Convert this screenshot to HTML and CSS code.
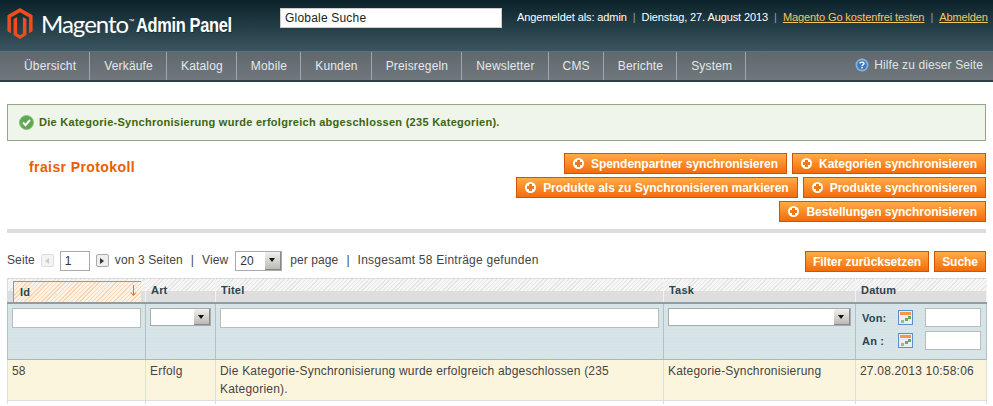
FILE: index.html
```html
<!DOCTYPE html>
<html>

<head>
  <meta charset="UTF-8">
  <title>fraisr Protokoll</title>
  <link rel="stylesheet" href="styles.css">
</head>

<body>
  <div class="header">
    <div class="logo">
      <svg class="logo-icon" viewBox="0 0 26 32">
        <path d="M13 0 26 7.5V24l-3.6 2.1V9.8L13 4.4 3.6 9.8v16.3L0 24V7.5Z" />
        <path d="M6.4 11.4 10 9.300v17l3 1.800 3-1.800v-17l3.600 2.100v16.400L13 32l-6.600-4.200Z" />
      </svg>
      <span class="logo-name">Magento</span>
      <span class="logo-tm">™</span>
      <span class="logo-panel">Admin Panel</span>
    </div>
    <input class="search" type="text" value="Globale Suche">
    <div class="user-links">
      <span>Angemeldet als: admin</span>
      <i>|</i>
      <span>Dienstag, 27. August 2013</span>
      <i>|</i>
      <a href="#">Magento Go kostenfrei testen</a>
      <i>|</i>
      <a href="#">Abmelden</a>
    </div>
  </div>

  <div class="nav">
    <a href="#">Übersicht</a>
    <a href="#">Verkäufe</a>
    <a href="#">Katalog</a>
    <a href="#">Mobile</a>
    <a href="#">Kunden</a>
    <a href="#">Preisregeln</a>
    <a href="#">Newsletter</a>
    <a href="#">CMS</a>
    <a href="#">Berichte</a>
    <a href="#">System</a>
    <div class="help">
      <svg viewBox="0 0 14 14">
        <circle cx="7" cy="7" r="6.500" fill="#8db4e0" />
        <circle cx="7" cy="7" r="4.800" fill="#3f78b8" />
        <path d="M5 5.600C5 3.600 9 3.600 9 5.600 9 7 7 6.800 7 8.200" fill="none" stroke="#fff" stroke-width="1.400" />
        <rect x="6.300" y="9" width="1.400" height="1.500" fill="#fff" />
      </svg>
      <span>Hilfe zu dieser Seite</span>
    </div>
  </div>

  <div class="main">
    <div class="message">
      <svg viewBox="0 0 15 15">
        <circle cx="7.500" cy="7.500" r="7" fill="#5fa84f" stroke="#8fbf86" />
        <path d="M4 7.500 6.500 10.200 11 5" fill="none" stroke="#fff" stroke-width="2" />
      </svg>
      <span>Die Kategorie-Synchronisierung wurde erfolgreich abgeschlossen (235 Kategorien).</span>
    </div>

    <div class="title-row">
      <h3>fraisr Protokoll</h3>
      <div class="actions">
        <button class="btn"><b class="plus"></b>Spendenpartner synchronisieren</button>
        <button class="btn"><b class="plus"></b>Kategorien synchronisieren</button>
        <button class="btn"><b class="plus"></b>Produkte als zu Synchronisieren markieren</button>
        <button class="btn"><b class="plus"></b>Produkte synchronisieren</button>
        <button class="btn"><b class="plus"></b>Bestellungen synchronisieren</button>
      </div>
    </div>

    <div class="pager">
      <span>Seite</span>
      <span class="page-btn disabled"><b class="arrow-left"></b></span>
      <input class="page-input" type="text" value="1">
      <span class="page-btn"><b class="arrow-right"></b></span>
      <span>von 3 Seiten</span>
      <span class="sep">|</span>
      <span>View</span>
      <div class="select view-select"><span>20</span><b class="select-arrow"></b></div>
      <span>per page</span>
      <span class="sep">|</span>
      <span class="total">Insgesamt 58 Einträge gefunden</span>
      <div class="pager-btns">
        <button class="btn btn-small">Filter zurücksetzen</button>
        <button class="btn btn-small">Suche</button>
      </div>
    </div>

    <table class="grid">
      <colgroup>
        <col class="col-id">
        <col class="col-art">
        <col class="col-title">
        <col class="col-task">
        <col class="col-date">
      </colgroup>
      <thead>
        <tr class="headings">
          <th class="sorted"><div><span>Id</span><svg viewBox="0 0 7 11">
                <path d="M3.500 0V10M1 7.500 3.500 10.500 6 7.500" fill="none" stroke="#f26a12" />
              </svg></div></th>
          <th>Art</th>
          <th>Titel</th>
          <th>Task</th>
          <th>Datum</th>
        </tr>
        <tr class="filters">
          <td><input type="text"></td>
          <td><div class="select"><span></span><b class="select-arrow"></b></div></td>
          <td><input type="text"></td>
          <td><div class="select"><span></span><b class="select-arrow"></b></div></td>
          <td>
            <div class="date-row">
              <label>Von:</label>
              <svg class="cal" viewBox="0 0 15 15">
                <rect x=".5" y=".5" width="14" height="14" fill="#e9eef6" stroke="#5d8fd0" />
                <rect x="2" y="2" width="11" height="3" fill="#f4994a" />
                <rect x="7" y="8" width="3" height="3" fill="#6cab5e" />
                <rect x="3" y="10" width="3" height="3" fill="#8fbf86" />
                <rect x="10" y="6" width="3" height="3" fill="#6cab5e" />
              </svg>
              <input type="text">
            </div>
            <div class="date-row">
              <label>An :</label>
              <svg class="cal" viewBox="0 0 15 15">
                <rect x=".5" y=".5" width="14" height="14" fill="#e9eef6" stroke="#5d8fd0" />
                <rect x="2" y="2" width="11" height="3" fill="#f4994a" />
                <rect x="7" y="8" width="3" height="3" fill="#6cab5e" />
                <rect x="3" y="10" width="3" height="3" fill="#8fbf86" />
                <rect x="10" y="6" width="3" height="3" fill="#6cab5e" />
              </svg>
              <input type="text">
            </div>
          </td>
        </tr>
      </thead>
      <tbody>
        <tr class="row-on">
          <td>58</td>
          <td>Erfolg</td>
          <td>Die Kategorie-Synchronisierung wurde erfolgreich abgeschlossen (235 Kategorien).</td>
          <td>Kategorie-Synchronisierung</td>
          <td>27.08.2013 10:58:06</td>
        </tr>
        <tr class="row-next">
          <td></td>
          <td></td>
          <td></td>
          <td></td>
          <td></td>
        </tr>
      </tbody>
    </table>
  </div>
</body>

</html>
```

FILE: styles.css
```css
:root {
  --color-text: #444;
  --color-orange: #eb5e00;
  --color-heading: #2d444f;
}

* {
  box-sizing: border-box;
}

html,
body {
  height: 406px;
  overflow: hidden;
}

body {
  margin: 0;
  background-color: #fff;
  color: var(--color-text);
  font-family: "Liberation Sans", Arial, sans-serif;
  font-size: 12px;
  letter-spacing: .2px;
}

/* header */
.header {
  height: 52px;
  padding: 8px 0 0 7px;
  background: linear-gradient(#0b2229, #3a5661);
  border-bottom: 1px solid #5c7480;

  display: flex;
  align-items: flex-start;
}

.logo {
  flex-shrink: 0;
  width: 273px;
  color: #fff;

  display: flex;
  align-items: center;
}

.logo-icon {
  width: 26px;
  height: 31px;
  flex-shrink: 0;
  fill: #f14d1c;
}

.logo-name {
  margin-left: 8px;
  font-family: "Lato", sans-serif;
  font-size: 24px;
  letter-spacing: -1px;
}

.logo-tm {
  width: 6px;
  font-size: 6px;
  margin-bottom: 6px;
}

.logo-panel {
  margin-left: 2px;
  margin-top: 3px;
  font-size: 20px;
  font-weight: bold;
  letter-spacing: -.4px;
  text-shadow: 1px 1px 1px #16303a;
  transform: scaleX(.82);
  transform-origin: left center;
  white-space: nowrap;
}

.search {
  flex-shrink: 0;
  width: 222px;
  height: 20px;
  padding: 0 4px;
  border: 1px solid #ccc;
  color: #222;
  font: inherit;
  letter-spacing: .2px;
  border-radius: 0;
}

.user-links {
  margin-left: 15px;
  margin-top: 3px;
  color: #fff;
  font-size: 11px;
  letter-spacing: -.1px;
  white-space: nowrap;

  display: flex;
  gap: 6px;
}

.user-links i {
  color: #8da3ab;
  font-style: normal;
}

.user-links a {
  color: #f8c45e;
}

/* nav */
.nav {
  height: 30px;
  padding-left: 10px;
  background: linear-gradient(#5f686d, #70787d);
  border-bottom: 2px solid #2e3f47;
  letter-spacing: .17px;

  display: flex;
  align-items: stretch;
}

.nav a {
  padding: 0 13px 0 14px;
  border-right: 1px solid #a0a6a9;
  color: #e6e8e9;
  line-height: 28px;
  text-decoration: none;
  white-space: nowrap;
}

.help {
  margin-left: auto;
  padding: 0 10px 2px 0;
  color: #dfe3e5;
  letter-spacing: .1px;

  display: flex;
  align-items: center;
  gap: 5px;
}

.help svg {
  width: 14px;
  height: 14px;
}

/* main area */
.main {
  padding: 22px 7px 0 7px;
}

.message {
  height: 37px;
  padding: 0 0 1px 11px;
  background-color: #eff5ea;
  border: 1px solid #95a486;
  color: #3d6611;
  font-weight: bold;
  font-size: 11px;
  letter-spacing: .28px;

  display: flex;
  align-items: center;
  gap: 5px;
}

.message svg {
  width: 15px;
  height: 15px;
}

.title-row {
  height: 92px;
  padding: 12px 0 0 22px;
  border-bottom: 4px solid #ddd;
  margin-bottom: 18px;

  display: flex;
  justify-content: space-between;
  align-items: flex-start;
}

.title-row h3 {
  margin: 5px 0 0 0;
  color: var(--color-orange);
  font-size: 14px;
  line-height: 18px;
  letter-spacing: .4px;
}

.actions {
  width: 480px;

  display: flex;
  flex-wrap: wrap;
  justify-content: flex-end;
  gap: 3px 5px;
}

.btn {
  height: 21px;
  padding: 0 8px;
  background: linear-gradient(#ffac47, #f36c0b);
  border: 1px solid #cf5500;
  color: #fff;
  font-family: inherit;
  font-size: 12px;
  font-weight: bold;
  letter-spacing: -.03px;
  white-space: nowrap;

  display: flex;
  align-items: center;
}

.btn-small {
  padding: 0 7px;
}

.plus {
  position: relative;
  width: 11px;
  height: 11px;
  margin-right: 7px;
  background-color: #fff;
  border-radius: 50%;
}

.plus::before,
.plus::after {
  content: "";
  position: absolute;
  background-color: #ee7a1a;
}

.plus::before {
  left: 2px;
  top: 4px;
  width: 7px;
  height: 3px;
}

.plus::after {
  left: 4px;
  top: 2px;
  width: 3px;
  height: 7px;
}

/* pager */
.pager {
  height: 27px;
  letter-spacing: .1px;

  display: flex;
  align-items: flex-start;
}

.pager > span {
  line-height: 18px;
  white-space: nowrap;
}

.pager > .total {
  letter-spacing: .25px;
}

.page-btn {
  width: 13px;
  height: 13px;
  margin: 3px 6px 0 6px;
  background-color: #eee;
  border: 1px solid #aaa;
  border-radius: 2px;

  display: flex;
  align-items: center;
  justify-content: center;
}

.page-btn.disabled {
  border-color: #ddd;
  background-color: #f4f4f4;
}

.arrow-left,
.arrow-right {
  width: 0;
  height: 0;
  border-top: 3px solid transparent;
  border-bottom: 3px solid transparent;
}

.arrow-left {
  border-right: 4px solid #ccc;
}

.arrow-right {
  border-left: 4px solid #333;
}

.page-input {
  width: 30px;
  height: 20px;
  padding: 0 4px;
  border: 1px solid #aaa;
  color: #333;
  font: inherit;
  border-radius: 0;
}

.sep {
  margin: 0 8px;
}

.select {
  height: 18px;
  background-color: #fff;
  border: 1px solid #aaa;
  color: #333;

  display: flex;
  align-items: center;
  justify-content: space-between;
}

.select span {
  padding-left: 4px;
}

.select-arrow {
  position: relative;
  width: 16px;
  height: 100%;
  background: linear-gradient(#f2f0ec, #bcbab6);
  border-right: 1px solid #888;
  border-bottom: 1px solid #888;
}

.select-arrow::after {
  content: "";
  position: absolute;
  left: 4px;
  top: 6px;
  border-left: 3px solid transparent;
  border-right: 3px solid transparent;
  border-top: 4px solid #111;
}

.view-select {
  width: 47px;
  height: 20px;
  margin: 0 8px 0 7px;
}

.pager-btns {
  margin-left: auto;
  display: flex;
  gap: 5px;
}

/* grid */
.grid {
  width: 979px;
  table-layout: fixed;
  border-collapse: collapse;
}

.col-id { width: 138px; }
.col-art { width: 70px; }
.col-title { width: 448px; }
.col-task { width: 192px; }
.col-date { width: 131px; }

.headings th {
  height: 24px;
  padding: 0 4px 1px 5px;
  background:
    repeating-linear-gradient(135deg, #e6e6e6 0 1px, #f6f6f6 1px 3px) top / 100% 12px no-repeat,
    #dedede;
  border: 1px solid #d8dcdd;
  border-right-color: #f2f2f2;
  border-bottom: 2px solid #8f9ca1;
  color: var(--color-heading);
  font-size: 11px;
  text-align: left;
}

.headings th.sorted {
  padding: 2px 4px 0 5px;
}

.sorted div {
  height: 21px;
  padding: 0 4px 1px 6px;
  background: repeating-linear-gradient(135deg, #f8d6b4 0 1px, #fdf2e4 1px 3px);
  border-left: 1px solid #8f9ca1;
  border-top: 1px solid #8f9ca1;

  display: flex;
  align-items: center;
  justify-content: space-between;
}

.sorted svg {
  width: 7px;
  height: 11px;
  margin-bottom: 2px;
}

.filters td {
  height: 56px;
  padding: 4px 4px 0 4px;
  vertical-align: top;
  background-color: #d7e5e8;
  background-image: radial-gradient(#cfdee1 1px, transparent 1px);
  background-size: 3px 3px;
  border: 1px solid #b3c1c5;
  border-bottom: 1px solid #a9b6ba;
}

.filters input {
  width: 100%;
  height: 20px;
  background-color: #fff;
  border: 1px solid #bbb;
  border-radius: 0;
  display: block;
}

.date-row {
  height: 19px;
  margin-bottom: 4px;
  padding-left: 2px;
  color: var(--color-heading);
  font-weight: bold;
  font-size: 11px;

  display: flex;
  align-items: center;
}

.date-row label {
  width: 36px;
}

.cal {
  width: 15px;
  height: 15px;
  flex-shrink: 0;
}

.filters .date-row input {
  width: 56px;
  height: 19px;
  margin-left: 12px;
}

tbody td {
  padding: 2px 4px 2px 4px;
  vertical-align: top;
  border: 1px solid #dadfe0;
  color: #444;
  line-height: 18px;
}

.row-on td {
  height: 40px;
  background-color: #fcf5dd;
}

.row-next td {
  height: 4px;
  padding: 0;
  border-bottom: none;
}
```
